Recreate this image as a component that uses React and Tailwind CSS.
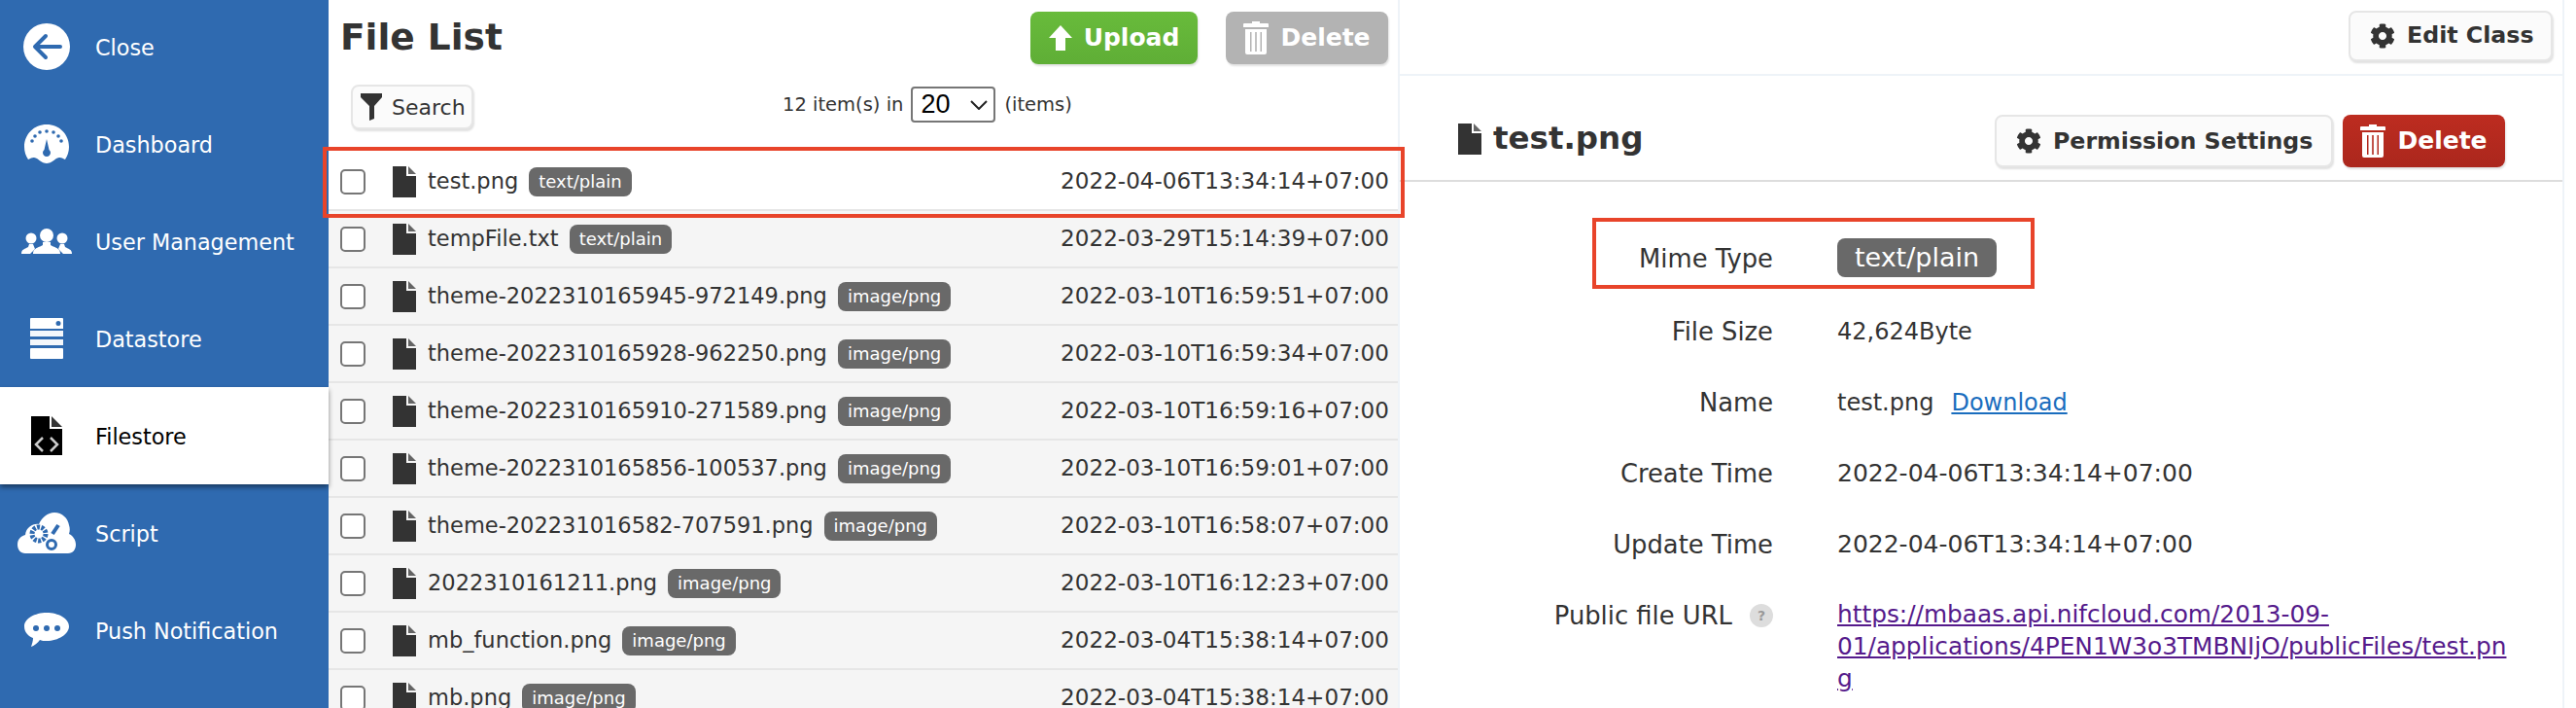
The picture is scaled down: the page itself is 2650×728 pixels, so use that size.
import React from 'react';
import { FaCog } from 'react-icons/fa';

const files = [
  { name: 'test.png', type: 'text/plain', date: '2022-04-06T13:34:14+07:00', active: true },
  { name: 'tempFile.txt', type: 'text/plain', date: '2022-03-29T15:14:39+07:00' },
  { name: 'theme-2022310165945-972149.png', type: 'image/png', date: '2022-03-10T16:59:51+07:00' },
  { name: 'theme-2022310165928-962250.png', type: 'image/png', date: '2022-03-10T16:59:34+07:00' },
  { name: 'theme-2022310165910-271589.png', type: 'image/png', date: '2022-03-10T16:59:16+07:00' },
  { name: 'theme-2022310165856-100537.png', type: 'image/png', date: '2022-03-10T16:59:01+07:00' },
  { name: 'theme-202231016582-707591.png', type: 'image/png', date: '2022-03-10T16:58:07+07:00' },
  { name: '2022310161211.png', type: 'image/png', date: '2022-03-10T16:12:23+07:00' },
  { name: 'mb_function.png', type: 'image/png', date: '2022-03-04T15:38:14+07:00' },
  { name: 'mb.png', type: 'image/png', date: '2022-03-04T15:38:14+07:00' },
];

const FileIcon = ({ className }) => (
  <svg viewBox="0 0 24 32" className={className} fill="currentColor">
    <path d="M0 0h14v10h10v22H0z" />
    <path d="M16 0l8 8h-8z" opacity="0.75" />
  </svg>
);

const TrashIcon = ({ className }) => (
  <svg viewBox="0 0 26 34" className={className} fill="currentColor">
    <path d="M9 0h8v2h8a1 1 0 0 1 1 1v3H0V3a1 1 0 0 1 1-1h8z" />
    <path fillRule="evenodd" d="M2 8h22v24a2 2 0 0 1-2 2H4a2 2 0 0 1-2-2zM7 11v20h1.5V11zM12.2 11v20h1.6V11zM17.5 11v20H19V11z" />
  </svg>
);

const BackIcon = () => (
  <svg viewBox="0 0 48 48" className="w-12 h-12">
    <circle cx="24" cy="24" r="24" fill="#fff" />
    <path d="M38 24H13M23 13 12 24l11 11" fill="none" stroke="#2f6ab0" strokeWidth="4" strokeLinecap="round" strokeLinejoin="round" />
  </svg>
);

const GaugeIcon = () => (
  <svg viewBox="0 0 46 40" className="w-[46px] h-10" fill="#fff">
    <path fillRule="evenodd" d="M23 0C10 0 0 10 0 23c0 5 1.500 9 4 13 4-2 5-3 9-1 3 2 6 5 10 5s7-3 10-5c4-2 5-1 9 1 2.500-4 4-8 4-13C46 10 36 0 23 0z" />
    <g fill="#2f6ab0">
      <circle cx="8" cy="17" r="1.800" /><circle cx="11" cy="12" r="1.800" /><circle cx="16" cy="8" r="1.800" />
      <circle cx="23" cy="7" r="1.800" /><circle cx="30" cy="8" r="1.800" /><circle cx="35" cy="12" r="1.800" /><circle cx="38" cy="17" r="1.800" />
      <path d="M23 15l2.500 11a4 4 0 1 1-5 0z" />
    </g>
  </svg>
);

const UsersIcon = () => (
  <svg viewBox="0 0 52 28" className="w-[52px] h-7" fill="#fff">
    <circle cx="10" cy="11" r="5.500" />
    <path d="M0 27c0-5 4-5 7-7l1-3h4l2 5-5 5z" />
    <circle cx="42" cy="11" r="5.500" />
    <path d="M52 27c0-5-4-5-7-7l-1-3h-4l-2 5 5 5z" />
    <circle cx="26" cy="8" r="7" />
    <path d="M12 27c0-6 5-6 10-9v-3h8v3c5 3 10 3 10 9z" />
  </svg>
);

const ServerIcon = () => (
  <svg viewBox="0 0 34 42" className="w-[34px] h-[42px]" fill="#fff">
    <path fillRule="evenodd" d="M1 0h32a1 1 0 0 1 1 1v10H0V1a1 1 0 0 1 1-1zm28 3a2.500 2.500 0 1 0 0 5 2.500 2.500 0 0 0 0-5z" />
    <rect y="13" width="34" height="6" opacity="0.95" />
    <rect y="22" width="34" height="6" opacity="0.95" />
    <rect y="31" width="34" height="11" rx="1" />
  </svg>
);

const CodeFileIcon = () => (
  <svg viewBox="0 0 32 40" className="w-8 h-10">
    <path d="M0 0h19v13h13v27H0z" fill="#000" />
    <path d="M21 0l11 11H21z" fill="#000" opacity="0.8" />
    <path d="M12 22l-7 7 7 7M20 22l7 7-7 7" fill="none" stroke="#ccc" strokeWidth="2.500" />
  </svg>
);

const CloudIcon = () => (
  <svg viewBox="0 0 60 42" className="w-[60px] h-[42px]">
    <path d="M8 42C3 42 0 38 0 33c0-6 4-9 8-10 1-8 8-12 14-11C25 5 31 0 38 0c8 0 14 6 15 13 1 3 1 6 0 9 4 2 7 6 7 11 0 5-3 9-8 9z" fill="#fff" />
    <g fill="none" stroke="#2f6ab0">
      <circle cx="22" cy="22" r="7" strokeWidth="5" strokeDasharray="3 1.400" />
      <circle cx="35" cy="33" r="4.500" strokeWidth="3" />
      <path d="M36 22l6-9" strokeWidth="4" />
    </g>
  </svg>
);

const BubbleIcon = () => (
  <svg viewBox="0 0 46 36" className="w-[46px] h-9" fill="#fff">
    <path d="M23 0c12 0 23 6 23 14 0 8-11 15-23 15-3 0-5 0-7-1-2 3-6 6-9 7 1-3 2-6 2-9C4 24 0 20 0 14 0 6 11 0 23 0z" />
    <g fill="#2f6ab0"><circle cx="12" cy="16" r="3" /><circle cx="23" cy="16" r="3" /><circle cx="34" cy="16" r="3" /></g>
  </svg>
);

const nav = [
  { label: 'Close', Icon: BackIcon },
  { label: 'Dashboard', Icon: GaugeIcon },
  { label: 'User Management', Icon: UsersIcon },
  { label: 'Datastore', Icon: ServerIcon },
  { label: 'Filestore', Icon: CodeFileIcon, active: true },
  { label: 'Script', Icon: CloudIcon },
  { label: 'Push Notification', Icon: BubbleIcon },
];

const Badge = ({ children, className }) => (
  <span className={`inline-flex items-center justify-center bg-[#696969] text-white rounded-lg ${className}`}>{children}</span>
);

const GrayButton = ({ children, className }) => (
  <button className={`flex items-center bg-[#fbfbfb] border-2 border-[#e6e6e6] rounded-lg shadow-[1px_2px_2px_rgba(0,0,0,0.12)] font-bold text-[#333] text-[23.7px] ${className}`}>
    {children}
  </button>
);

const DetailRow = ({ label, children, className = 'h-[73px]' }) => (
  <div className={`flex text-[24px] leading-[36px] ${className}`}>
    <div className="w-[324px] text-right text-[25.8px] text-[#333] shrink-0">{label}</div>
    <div className="ml-[66px] w-[690px] text-[#333]">{children}</div>
  </div>
);

export default function App() {
  return (
    <div className="relative flex w-[2650px] h-[728px] overflow-hidden bg-white font-['DejaVu_Sans',sans-serif] text-[#333]">
      {/* Sidebar */}
      <aside className="w-[338px] shrink-0 bg-[#2f6ab0] -mt-[2px]">
        {nav.map(({ label, Icon, active }) => (
          <div
            key={label}
            className={`relative flex items-center h-[100px] text-[22.3px] ${active ? 'bg-white text-black shadow-[0_3px_5px_rgba(0,0,0,0.45)]' : 'text-white'}`}
          >
            <div className="w-[98px] shrink-0 flex justify-center pr-[2px]">
              <Icon />
            </div>
            <span className="mt-[3px]">{label}</span>
          </div>
        ))}
      </aside>

      {/* File list */}
      <section className="w-[1102px] shrink-0 border-r-2 border-[#eef3f8]">
        <div className="flex items-center h-[54px] mt-3 pl-[12px] pr-[10px]">
          <h1 className="text-[37.5px] font-bold leading-none text-[#333]">File List</h1>
          <button className="ml-auto flex items-center justify-center gap-[12px] w-[172px] h-[54px] rounded-lg bg-gradient-to-b from-[#68bb3b] to-[#5fae36] text-white font-bold text-[25px] shadow-[1px_2px_2px_rgba(0,0,0,0.12)]">
            <svg viewBox="0 0 24 26" className="w-6 h-[26px]" fill="#fff"><path d="M12 0l12 13h-7v13H7V13H0z" /></svg>
            Upload
          </button>
          <button className="ml-[29px] flex items-center justify-center gap-[12px] w-[167px] h-[54px] rounded-lg bg-[#b3b3b3] text-white font-bold text-[25px] shadow-[1px_2px_2px_rgba(0,0,0,0.12)]">
            <TrashIcon className="w-[26px] h-[34px]" />
            Delete
          </button>
        </div>

        <div className="flex items-center h-[46px] mt-[21px] pl-[23px] text-[#333]">
          <button className="flex items-center gap-[10px] w-[126px] h-[46px] pl-[8px] bg-[#fbfbfb] border-2 border-[#e6e6e6] rounded-lg shadow-[1px_2px_2px_rgba(0,0,0,0.12)] text-[22px]">
            <svg viewBox="0 0 22 28" className="w-[22px] h-7" fill="#333"><path d="M0 0h22v4l-8 9v13l-5 2V13L0 4z" /></svg>
            Search
          </button>
          <div className="flex items-center ml-[318px] text-[19.5px] -mt-[5px]">
            <span>12 item(s) in</span>
            <div className="relative ml-[8px]">
              <select defaultValue="20" className="appearance-none w-[87px] h-[37px] border-2 border-[#767676] rounded-[4px] bg-white pl-[8px] text-black text-[27px] leading-none font-['Liberation_Sans',sans-serif]">
                <option>20</option>
              </select>
              <svg viewBox="0 0 18 10" className="absolute right-[8px] top-[14px] w-[18px] h-[10px]" fill="none" stroke="#222" strokeWidth="2"><path d="M1 1l8 8 8-8" /></svg>
            </div>
            <span className="ml-[9px]">(items)</span>
          </div>
        </div>

        <ul className="mt-[25px]">
          {files.map((f) => (
            <li
              key={f.name}
              className={`flex items-center h-[59px] pl-[12px] pr-[9px] border-b-2 border-[#e6e6e6] ${f.active ? 'bg-white' : 'bg-[#f5f5f5]'}`}
            >
              <span className="w-[26px] h-[26px] shrink-0 bg-white border-2 border-[#767676] rounded-[5px]" />
              <FileIcon className="w-6 h-8 ml-[28px] shrink-0 text-[#333]" />
              <span className="ml-[12px] text-[22.5px] text-[#333]">{f.name}</span>
              <Badge className="ml-[11px] h-[30px] px-[10px] text-[18px]">{f.type}</Badge>
              <span className="ml-auto text-[23.1px] text-[#333]">{f.date}</span>
            </li>
          ))}
        </ul>
      </section>

      {/* Detail */}
      <section className="w-[1198px] shrink-0 border-r-2 border-[#eef3f8]">
        <div className="flex justify-end items-start h-[78px] pt-[11px] pr-[10px] border-b-2 border-[#eef3f8]">
          <GrayButton className="gap-[12px] w-[210px] h-[52px] pl-[20px]">
            <FaCog className="w-[26px] h-[26px] text-[#333]" />
            Edit Class
          </GrayButton>
        </div>
        <div className="flex items-center h-[109px] pt-[26px] pl-[60px] pr-[59px] border-b-2 border-[#ddd]">
          <FileIcon className="w-6 h-8 text-[#333] shrink-0 -mt-[4px]" />
          <h2 className="ml-[12px] text-[32.5px] font-bold text-[#333] -mt-[4px]">test.png</h2>
          <GrayButton className="ml-auto gap-[12px] w-[348px] h-[54px] pl-[20px]">
            <FaCog className="w-[26px] h-[26px] text-[#333]" />
            <span className="mt-[2px]">Permission Settings</span>
          </GrayButton>
          <button className="ml-[10px] flex items-center justify-center gap-[12px] w-[167px] h-[54px] rounded-lg bg-gradient-to-b from-[#bd2c20] to-[#ab271d] text-white font-bold text-[25px] shadow-[1px_2px_2px_rgba(0,0,0,0.12)]">
            <TrashIcon className="w-[26px] h-[34px]" />
            Delete
          </button>
        </div>
        <div className="pt-[61px] pl-[60px]">
          <DetailRow label="Mime Type" className="h-[75px]">
            <Badge className="h-10 w-[164px] text-[27px] -mt-[7px]">text/plain</Badge>
          </DetailRow>
          <DetailRow label="File Size">42,624Byte</DetailRow>
          <DetailRow label="Name">
            test.png<a href="#" className="ml-[18px] text-[#1a6dbe] underline">Download</a>
          </DetailRow>
          <DetailRow label="Create Time"><span className="text-[25px]">2022-04-06T13:34:14+07:00</span></DetailRow>
          <DetailRow label="Update Time"><span className="text-[25px]">2022-04-06T13:34:14+07:00</span></DetailRow>
          <DetailRow
            label={
              <span className="inline-flex items-center">
                Public file URL
                <span className="ml-[18px] w-6 h-6 rounded-full bg-[#ddd] text-[#999] font-bold text-[14px] flex items-center justify-center">?</span>
              </span>
            }
          >
            <p className="leading-[33px] text-[24.8px]">
              <a href="#" className="text-[#551a8b] underline">
                https://mbaas.api.nifcloud.com/2013-09-<br />01/applications/4PEN1W3o3TMBNIjO/publicFiles/test.pn<br />g
              </a>
            </p>
          </DetailRow>
        </div>
      </section>

      {/* Annotation frames */}
      <div className="absolute left-[332px] top-[151px] w-[1113px] h-[73px] border-4 border-[#e8442a]" />
      <div className="absolute left-[1638px] top-[224px] w-[455px] h-[73px] border-4 border-[#e8442a]" />
    </div>
  );
}
